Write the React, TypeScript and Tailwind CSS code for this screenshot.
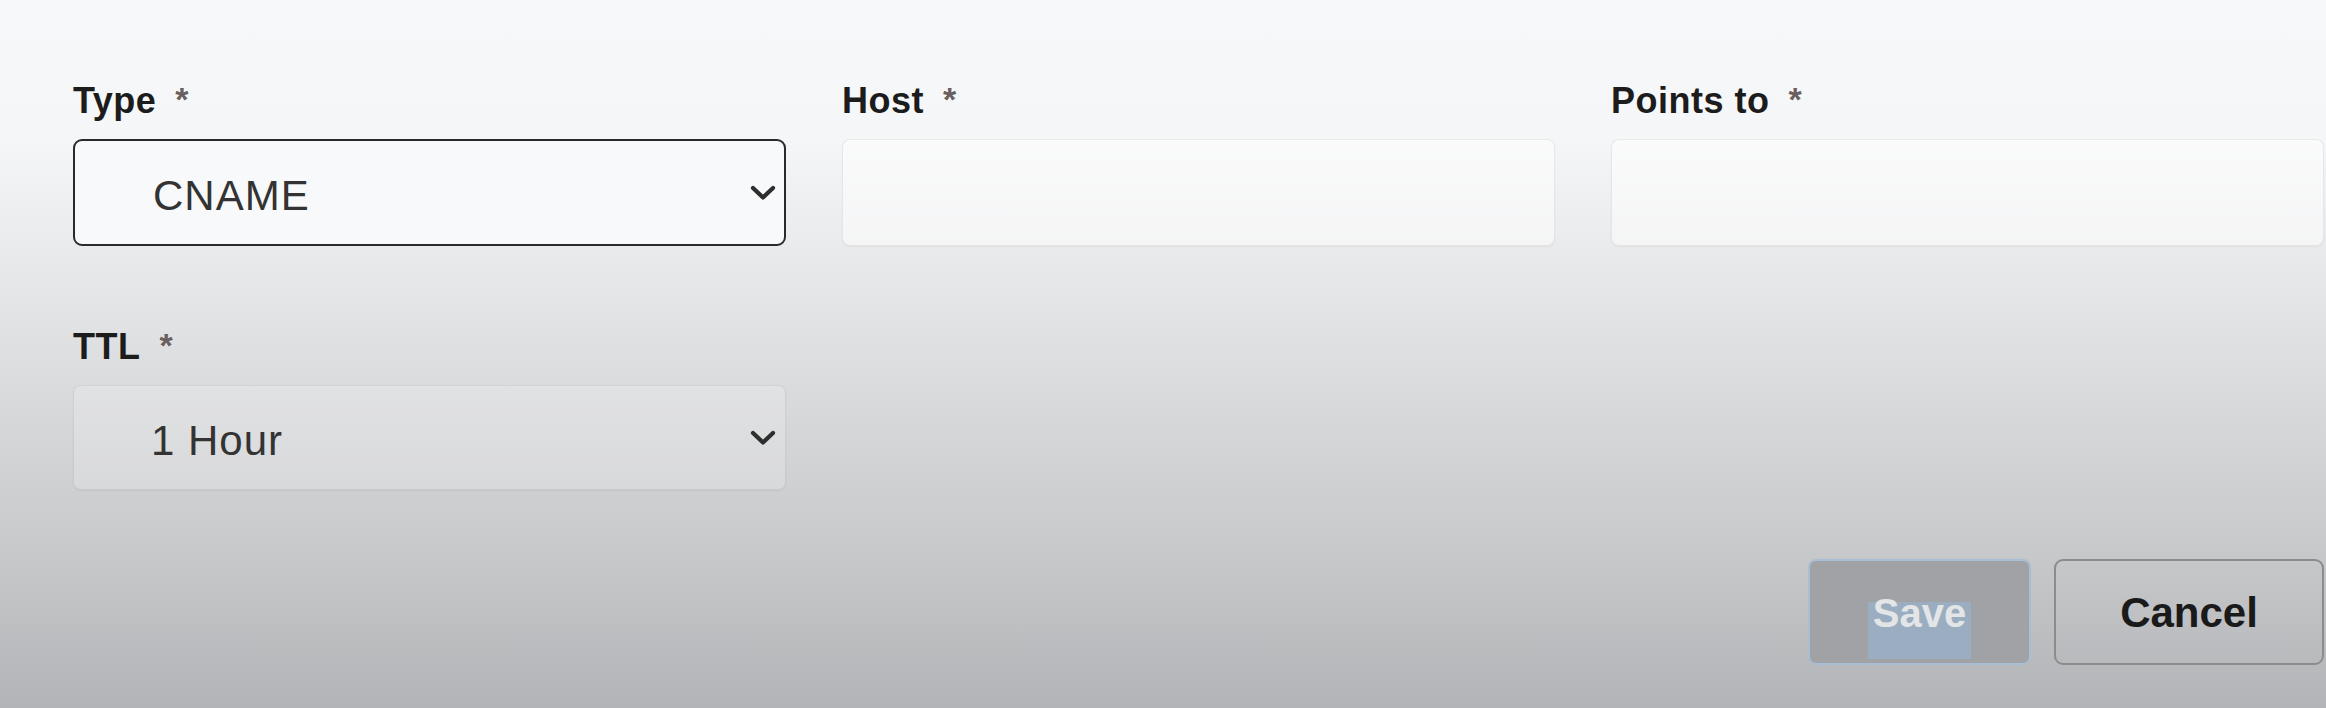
import React from 'react';

const sans = { fontFamily: '"Liberation Sans", Arial, sans-serif' };

function Chevron() {
  return (
    <svg width="26" height="16" viewBox="0 0 26 16" fill="none" aria-hidden="true">
      <path d="M3 3 L13 12.5 L23 3" stroke="#2e2e2e" strokeWidth="4.2" strokeLinecap="round" strokeLinejoin="round" />
    </svg>
  );
}

function Label({ text }: { text: string }) {
  return (
    <div className="flex h-[37px] items-start pt-[3px] leading-[34px]">
      <span className="text-[36px] font-bold tracking-[0.5px] text-[#1c1c1c]">{text}</span>
      <span className="ml-[19px] text-[34px] font-bold leading-[30px] text-[#6a5f5f]">*</span>
    </div>
  );
}

function SelectBox({ value, focused }: { value: string; focused?: boolean }) {
  return (
    <div
      className={
        focused
          ? 'flex h-[107px] items-center justify-between rounded-[9px] border-2 border-[#2a2a2a] bg-[#f8f9fa] pr-[8px] pl-[78px]'
          : 'flex h-[105px] items-center justify-between rounded-[8px] border border-black/[0.07] bg-white/20 pr-[9px] pl-[77px] shadow-[0_1px_2px_rgba(0,0,0,0.05)]'
      }
    >
      <span className="pt-[6px] text-[42px] tracking-[1px] text-[#333]">{value}</span>
      <Chevron />
    </div>
  );
}

function TextBox() {
  return (
    <div className="h-[107px] rounded-[8px] border border-black/[0.07] bg-white/50 shadow-[0_1px_2px_rgba(0,0,0,0.05)]" />
  );
}

export default function App() {
  return (
    <div
      style={sans}
      className="h-[708px] w-full overflow-hidden bg-[linear-gradient(to_bottom,#f7f8f9_0px,#f5f6f7_140px,#e6e7e9_280px,#c9cacc_540px,#b3b4b7_708px)] pt-[81px] pr-[2px] pl-[73px]"
    >
      <div className="grid grid-cols-3 gap-x-[56px]">
        <div>
          <Label text="Type" />
          <div className="mt-[21px]">
            <SelectBox value="CNAME" focused />
          </div>
        </div>
        <div>
          <Label text="Host" />
          <div className="mt-[21px]">
            <TextBox />
          </div>
        </div>
        <div>
          <Label text="Points to" />
          <div className="mt-[21px]">
            <TextBox />
          </div>
        </div>
      </div>

      <div className="mt-[81px] grid grid-cols-3 gap-x-[56px]">
        <div>
          <Label text="TTL" />
          <div className="mt-[21px]">
            <SelectBox value="1 Hour" />
          </div>
        </div>
      </div>

      <div className="mt-[69px] flex justify-end gap-[23px]">
        <button
          type="button"
          disabled
          className="flex h-[106px] w-[223px] items-center justify-center rounded-[8px] border-2 border-[#a9bdd4] bg-[#a1a2a5]"
        >
          <span className="mt-[18px] bg-[linear-gradient(to_bottom,transparent_25%,#9badc0_25%)] px-[5px] pb-[16px] text-[40px] font-bold text-[#e4e5e7]">
            Save
          </span>
        </button>
        <button
          type="button"
          className="flex h-[106px] w-[270px] items-center justify-center rounded-[9px] border-2 border-[#8c8c8e] bg-transparent"
        >
          <span className="text-[42px] font-bold text-[#1a1a1a]">Cancel</span>
        </button>
      </div>
    </div>
  );
}
